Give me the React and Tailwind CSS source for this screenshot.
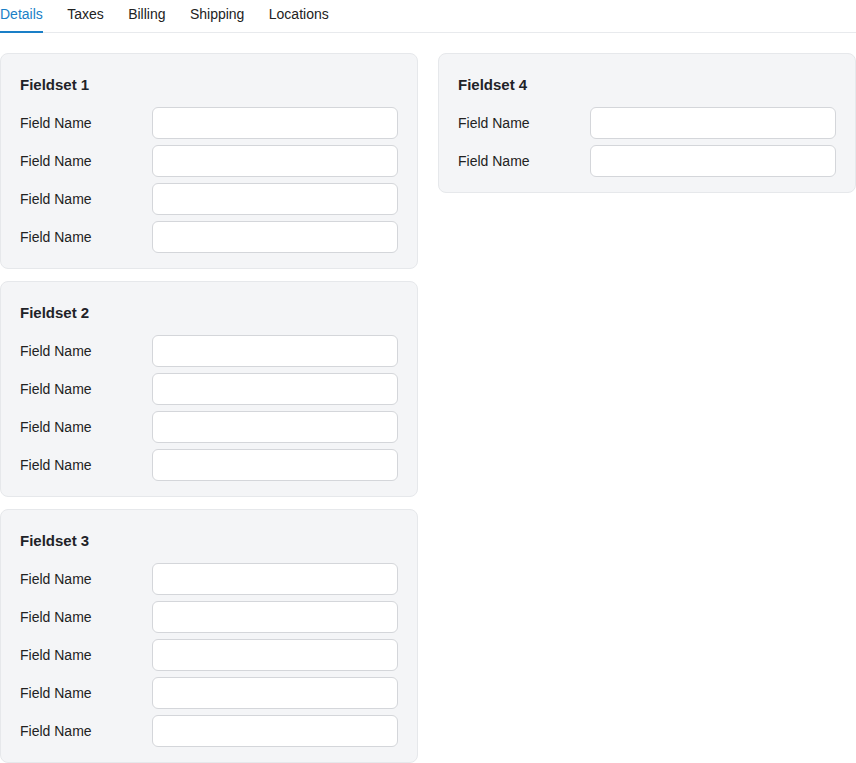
import { useState } from "react";

const fieldsets = [
  { title: "Fieldset 1", fields: 4 },
  { title: "Fieldset 2", fields: 4 },
  { title: "Fieldset 3", fields: 5 },
];

function Fieldset({ title, fields }) {
  return (
    <div className="bg-[#f4f5f7] border border-[#e6e8eb] rounded-lg px-[19px] pt-5 pb-[15px]">
      <h3 className="text-[15px] font-bold text-[#1f2328] leading-[22px] mb-[11px]">{title}</h3>
      <div className="flex flex-col gap-[6px]">
        {Array.from({ length: fields }).map((_, i) => (
          <div key={i} className="flex items-center">
            <label className="w-[132px] shrink-0 text-[14px] text-[#222]">Field Name</label>
            <input
              type="text"
              className="flex-1 h-8 bg-white border border-[#d4d6da] rounded-md px-2 text-sm outline-none"
            />
          </div>
        ))}
      </div>
    </div>
  );
}

export default function App() {
  const [tab, setTab] = useState("Details");
  const tabs = ["Details", "Taxes", "Billing", "Shipping", "Locations"];

  return (
    <div className="font-['Liberation_Sans',Arial,sans-serif] bg-white min-h-screen">
      <div className="flex gap-[24.4px] border-b border-[#e8eaed]">
        {tabs.map((t) => (
          <button
            key={t}
            onClick={() => setTab(t)}
            className={`h-[33px] pb-1 text-[14px] leading-none border-b-2 -mb-px ${
              tab === t ? "text-[#1a7fc7] border-[#1a7fc7]" : "text-[#222] border-transparent"
            }`}
          >
            {t}
          </button>
        ))}
      </div>
      <div className="grid grid-cols-2 gap-x-5 mt-5 items-start">
        <div className="flex flex-col gap-3">
          {fieldsets.map((f) => (
            <Fieldset key={f.title} {...f} />
          ))}
        </div>
        <div>
          <Fieldset title="Fieldset 4" fields={2} />
        </div>
      </div>
    </div>
  );
}
